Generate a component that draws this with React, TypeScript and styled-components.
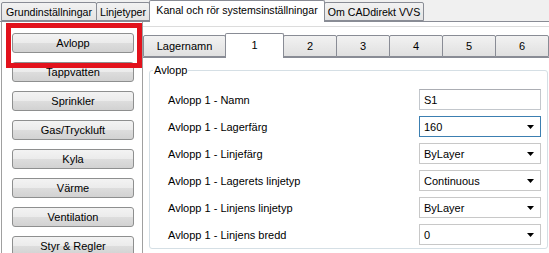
import React from "react";
import styled, { createGlobalStyle } from "styled-components";

const GlobalStyle = createGlobalStyle`
  html, body {
    margin: 0;
    padding: 0;
    background: #f0f0f0;
  }
  body {
    font-family: "Liberation Sans", Arial, sans-serif;
    font-size: 11px;
    color: #000;
  }
`;

const topTabs = [
  { name: "Grundinställningar", width: 96 },
  { name: "Linjetyper", width: 54 },
  { name: "Kanal och rör systemsinställningar", width: 176, active: true },
  { name: "Om CADdirekt VVS", width: 100 },
];

const systems = [
  "Avlopp",
  "Tappvatten",
  "Sprinkler",
  "Gas/Tryckluft",
  "Kyla",
  "Värme",
  "Ventilation",
  "Styr & Regler",
];

const layerTabs = [
  { name: "Lagernamn", width: 83 },
  { name: "1", width: 59, active: true },
  { name: "2", width: 54 },
  { name: "3", width: 54 },
  { name: "4", width: 54 },
  { name: "5", width: 54 },
  { name: "6", width: 54 },
];

const rows = [
  { label: "Avlopp 1 - Namn", value: "S1", combo: false },
  { label: "Avlopp 1 - Lagerfärg", value: "160", combo: true, focused: true },
  { label: "Avlopp 1 - Linjefärg", value: "ByLayer", combo: true },
  { label: "Avlopp 1 - Lagerets linjetyp", value: "Continuous", combo: true },
  { label: "Avlopp 1 - Linjens linjetyp", value: "ByLayer", combo: true },
  { label: "Avlopp 1 - Linjens bredd", value: "0", combo: true },
];

const Arrow = () => (
  <svg width="7" height="4" viewBox="0 0 7 4">
    <path d="M0 0 H7 L3.5 4 Z" fill="#000" />
  </svg>
);

const App = () => {
  return (
    <Window>
      <GlobalStyle />
      <TopTabBar>
        {topTabs.map((t) => (
          <TopTab key={t.name} $width={t.width} $active={!!t.active}>
            {t.name}
          </TopTab>
        ))}
      </TopTabBar>
      <Page>
        <SideList>
          {systems.map((s) => (
            <SysButton key={s}>{s}</SysButton>
          ))}
        </SideList>
        <Settings>
          <LayerTabBar>
            {layerTabs.map((t) => (
              <LayerTab key={t.name} $width={t.width} $active={!!t.active}>
                {t.name}
              </LayerTab>
            ))}
          </LayerTabBar>
          <LayerPage>
            <GroupBox>
              <Legend>Avlopp</Legend>
              <Rows>
                {rows.map((r) => (
                  <React.Fragment key={r.label}>
                    <Label>{r.label}</Label>
                    <Field $focused={!!r.focused} $combo={r.combo}>
                      <span>{r.value}</span>
                      {r.combo && <Arrow />}
                    </Field>
                  </React.Fragment>
                ))}
              </Rows>
            </GroupBox>
          </LayerPage>
        </Settings>
      </Page>
      <Highlight />
    </Window>
  );
};

export default App;

const Window = styled.div`
  position: relative;
  width: 549px;
  height: 253px;
  overflow: hidden;
  display: flex;
  flex-direction: column;
  background: #f0f0f0;
`;

const TopTabBar = styled.div`
  display: flex;
  align-items: flex-end;
  height: 21px;
  padding-left: 1px;
  position: relative;
  z-index: 1;
`;

const TopTab = styled.div<{ $width: number; $active: boolean }>`
  box-sizing: border-box;
  width: ${(p) => p.$width}px;
  height: ${(p) => (p.$active ? 22 : 19)}px;
  margin-bottom: ${(p) => (p.$active ? -1 : 0)}px;
  display: flex;
  align-items: center;
  justify-content: center;
  white-space: nowrap;
  font-size: 10.6px;
  border: 1px solid #898c95;
  border-bottom: ${(p) => (p.$active ? "none" : "1px solid #898c95")};
  border-radius: 2px 2px 0 0;
  margin-right: -1px;
  padding-bottom: ${(p) => (p.$active ? 3 : 0)}px;
  background: ${(p) =>
    p.$active ? "#ffffff" : "linear-gradient(#f2f2f2, #e4e4e4)"};
`;

const Page = styled.div`
  flex: 1;
  display: flex;
  background: #ffffff;
  border-top: 1px solid #898c95;
  min-height: 0;
`;

const SideList = styled.div`
  box-sizing: border-box;
  width: 142px;
  margin-left: 1px;
  flex-shrink: 0;
  display: flex;
  flex-direction: column;
  gap: 9px;
  padding: 11px 0 0 10px;
  border-left: 1px solid #a0a0a0;
  border-right: 1px solid #a0a0a0;
  background: #ffffff;
`;

const SysButton = styled.div`
  box-sizing: border-box;
  width: 122px;
  height: 20px;
  flex-shrink: 0;
  display: flex;
  align-items: center;
  justify-content: center;
  border: 1px solid #8e8f8f;
  border-radius: 3px;
  background: linear-gradient(#f3f3f3 0%, #ebebeb 50%, #dddddd 51%, #d2d2d2 100%);
`;

const Settings = styled.div`
  flex: 1;
  min-width: 0;
  display: flex;
  flex-direction: column;
  margin-top: 4px;
  padding-top: 6px;
  border-top: 1px solid #dcdcdc;
`;

const LayerTabBar = styled.div`
  display: flex;
  align-items: flex-end;
  height: 24px;
  position: relative;
  z-index: 1;
`;

const LayerTab = styled.div<{ $width: number; $active: boolean }>`
  box-sizing: border-box;
  width: ${(p) => p.$width}px;
  flex-shrink: 0;
  height: ${(p) => (p.$active ? 25 : 22)}px;
  margin-bottom: ${(p) => (p.$active ? -1 : 0)}px;
  margin-right: -1px;
  display: flex;
  align-items: center;
  justify-content: center;
  padding-bottom: ${(p) => (p.$active ? 3 : 0)}px;
  border: 1px solid #898c95;
  border-bottom: ${(p) => (p.$active ? "none" : "1px solid #898c95")};
  border-radius: 2px 2px 0 0;
  background: ${(p) =>
    p.$active ? "#ffffff" : "linear-gradient(#f2f2f2, #e0e0e0)"};
`;

const LayerPage = styled.div`
  flex: 1;
  display: flex;
  padding: 12px 1px 6px 6px;
  border-top: 1px solid #898c95;
  background: #ffffff;
`;

const GroupBox = styled.div`
  position: relative;
  box-sizing: border-box;
  width: 400px;
  height: 179px;
  padding: 18px 6px 0 18px;
  border: 1px solid #d5dfe5;
  border-radius: 3px;
`;

const Legend = styled.span`
  position: absolute;
  top: -7px;
  left: 3px;
  padding: 0 1px;
  background: #ffffff;
  line-height: 13px;
`;

const Rows = styled.div`
  display: grid;
  grid-template-columns: 1fr 122px;
  grid-auto-rows: 21px;
  row-gap: 6px;
  align-items: center;
`;

const Label = styled.div`
  white-space: nowrap;
`;

const Field = styled.div<{ $focused: boolean; $combo: boolean }>`
  box-sizing: border-box;
  height: 21px;
  display: flex;
  align-items: center;
  justify-content: space-between;
  padding: 0 6px 0 4px;
  background: #ffffff;
  border: 1px solid
    ${(p) => (p.$focused ? "#3c7fb1" : p.$combo ? "#c8c8c8" : "#c3c7cc")};
  border-top-color: ${(p) =>
    p.$focused ? "#3c7fb1" : p.$combo ? "#c8c8c8" : "#abadb3"};
`;

const Highlight = styled.div`
  position: absolute;
  left: 6px;
  top: 23px;
  width: 136px;
  height: 45px;
  box-sizing: border-box;
  border: 5px solid #e2121c;
  z-index: 2;
  pointer-events: none;
`;
